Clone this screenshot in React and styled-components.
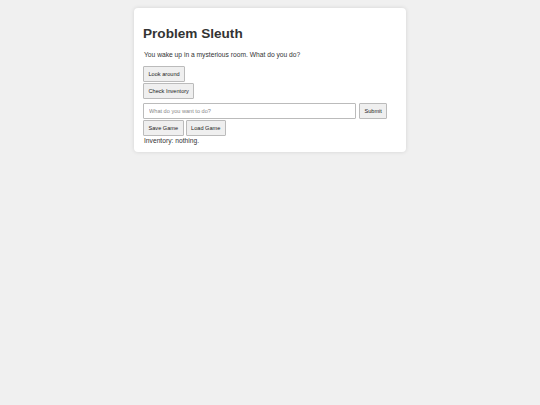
import styled, { createGlobalStyle } from "styled-components";

const GlobalStyle = createGlobalStyle`
  html, body {
    margin: 0;
    padding: 0;
    background: #f0f0f0;
  }
  body {
    font-family: "Liberation Sans", Arial, sans-serif;
    color: #333;
  }
`;

const Page = styled.div`
  width: 540px;
  height: 405px;
  padding-top: 8px;
  box-sizing: border-box;
`;

const Card = styled.div`
  width: 272px;
  margin: 0 auto;
  box-sizing: border-box;
  background: #fff;
  border-radius: 4px;
  box-shadow: 0 0 4px rgba(0, 0, 0, 0.12);
  padding: 9px 9px 8px;
`;

const Title = styled.h1`
  font-size: 13.6px;
  font-weight: bold;
  margin: 9px 0 10px;
  color: #333;
`;

const Text = styled.p`
  font-size: 6.7px;
  margin: 0 0 8px 1px;
`;

const Stack = styled.div`
  display: flex;
  flex-direction: column;
  align-items: flex-start;
  gap: 1px;
`;

const Row = styled.div`
  display: flex;
  align-items: stretch;
  gap: ${(p) => p.$gap || 2}px;
  margin-top: ${(p) => p.$top || 0}px;
`;

const Button = styled.button`
  font-family: "Liberation Sans", Arial, sans-serif;
  font-size: 5.6px;
  color: #222;
  background: #efefef;
  border: 1px solid #bbb;
  border-radius: 1px;
  height: 16px;
  padding: 0 4.5px;
  cursor: pointer;
`;

const Input = styled.input`
  font-family: "Liberation Sans", Arial, sans-serif;
  font-size: 5.6px;
  width: 213px;
  height: 16px;
  box-sizing: border-box;
  border: 1px solid #bbb;
  border-radius: 1px;
  padding: 0 5px;
  outline: none;
  &::placeholder {
    color: #888;
  }
`;

const Inventory = styled.div`
  font-size: 6.7px;
  margin: 1px 0 0 1px;
`;

export default function App() {
  return (
    <Page>
      <GlobalStyle />
      <Card>
        <Title>Problem Sleuth</Title>
        <Text>You wake up in a mysterious room. What do you do?</Text>
        <Stack>
          <Button>Look around</Button>
          <Button>Check Inventory</Button>
        </Stack>
        <Row $top={4} $gap={3}>
          <Input placeholder="What do you want to do?" />
          <Button>Submit</Button>
        </Row>
        <Row $top={1}>
          <Button>Save Game</Button>
          <Button>Load Game</Button>
        </Row>
        <Inventory>Inventory: nothing.</Inventory>
      </Card>
    </Page>
  );
}
